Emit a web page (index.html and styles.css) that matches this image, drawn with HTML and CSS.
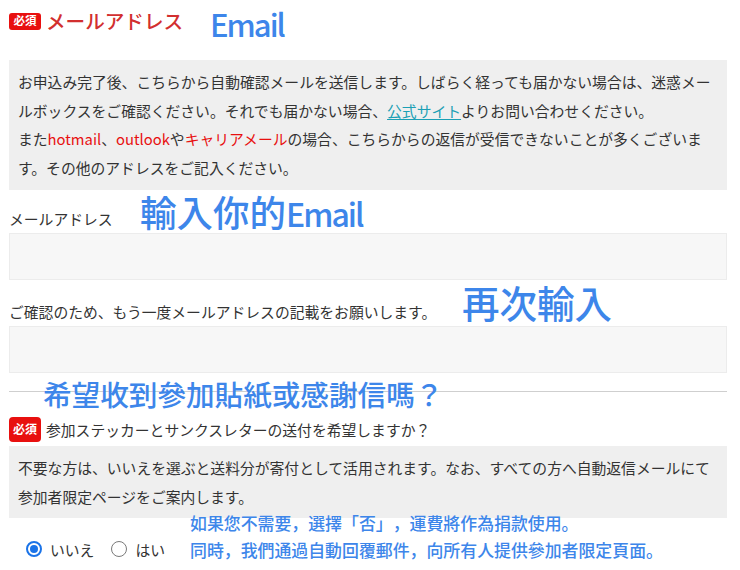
FILE: index.html
```html
<!DOCTYPE html>
<html lang="ja">
<head>
<meta charset="utf-8">
<link rel="stylesheet" href="styles.css">
</head>
<body>
<div class="page">
  <div class="head">
    <span class="badge">必須</span>
    <span class="title">メールアドレス</span>
  </div>
  <div class="note note-main">お申込み完了後、こちらから自動確認メールを送信します。しばらく経っても届かない場合は、迷惑メールボックスをご確認ください。それでも届かない場合、<a class="link" href="#">公式サイト</a>よりお問い合わせください。<br>また<span class="red">hotmail</span>、<span class="red">outlook</span>や<span class="red">キャリアメール</span>の場合、こちらからの返信が受信できないことが多くございます。その他のアドレスをご記入ください。</div>
  <div class="label label-first">メールアドレス</div>
  <div class="input"></div>
  <div class="label label-second">ご確認のため、もう一度メールアドレスの記載をお願いします。</div>
  <div class="input"></div>
  <hr class="rule">
  <div class="q">
    <span class="badge badge-tall">必須</span>
    <span class="q-text">参加ステッカーとサンクスレターの送付を希望しますか？</span>
  </div>
  <div class="note note-sub">不要な方は、いいえを選ぶと送料分が寄付として活用されます。なお、すべての方へ自動返信メールにて参加者限定ページをご案内します。</div>
  <div class="radios">
    <label class="opt"><span class="radio checked"></span><span>いいえ</span></label>
    <label class="opt"><span class="radio"></span><span>はい</span></label>
  </div>

  <div class="ann ann-email"><span class="latin">Email</span></div>
  <div class="ann ann-input">輸入你的<span class="latin">Email</span></div>
  <div class="ann ann-again">再次輸入</div>
  <div class="ann ann-q">希望收到參加貼紙或感謝信嗎？</div>
  <div class="ann ann-small">如果您不需要，選擇「否」，運費將作為捐款使用。<br>同時，我們通過自動回覆郵件，向所有人提供參加者限定頁面。</div>
</div>
</body>
</html>
```

FILE: styles.css
```css
* { box-sizing: border-box; }
html, body { margin: 0; padding: 0; background: #fff; }
body {
  font-family: "Noto Sans CJK JP", "Noto Sans", sans-serif;
  color: #333;
  font-size: 14.8px;
  text-spacing-trim: space-all;
}
.page {
  position: relative;
  width: 740px;
  height: 570px;
  padding: 0 13px 0 9px;
  overflow: hidden;
}
.head {
  display: flex;
  align-items: center;
  gap: 5px;
  padding-top: 9px;
  height: 33px;
}
.badge {
  display: inline-flex;
  align-items: center;
  justify-content: center;
  width: 32px;
  height: 17px;
  background: #e8100f;
  color: #fff;
  border-radius: 3px;
  font-size: 11.5px;
  font-weight: 700;
  line-height: 1;
}
.badge-tall {
  height: 25px;
  width: 32px;
  border-radius: 4px;
  font-size: 12px;
}
.title {
  color: #d22f2f;
  font-size: 19.6px;
  font-weight: 500;
  line-height: 24px;
}
.note {
  background: #efefef;
  padding: 8px 9px;
  line-height: 28.6px;
}
.note-main { margin-top: 27px; }
.red { color: #e8100f; }
.link {
  color: #1ba0b5;
  text-decoration: underline;
  text-underline-offset: 2px;
}
.label { line-height: 29px; }
.label-first { margin-top: 14px; }
.label-second { margin-top: 18px; line-height: 28px; }
.input {
  height: 47px;
  background: #f7f7f7;
  border: 1px solid #ececec;
}
.rule {
  margin: 18px 0 0;
  border: 0;
  border-top: 1px solid #cfcfcf;
  height: 0;
}
.q {
  display: flex;
  align-items: center;
  gap: 5px;
  margin-top: 24px;
  height: 26px;
}
.note-sub {
  margin-top: 4px;
  padding: 7px 9px;
  line-height: 29px;
}
.radios {
  display: flex;
  align-items: center;
  gap: 17px;
  margin-top: 19px;
  padding-left: 17px;
  height: 24px;
}
.opt {
  display: flex;
  align-items: center;
  gap: 8px;
}
.radio {
  width: 16px;
  height: 16px;
  border-radius: 50%;
  border: 1px solid #7a7a7a;
  background: #fff;
  position: relative;
}
.radio.checked { border: 2px solid #1a73e8; }
.radio.checked::after {
  content: "";
  position: absolute;
  left: 2px; top: 2px;
  width: 8px; height: 8px;
  border-radius: 50%;
  background: #1a73e8;
}
.ann {
  position: absolute;
  color: #3d86ea;
  font-family: "Noto Sans CJK TC", "Noto Sans", sans-serif;
  font-weight: 500;
  white-space: nowrap;
  line-height: 1;
}
.latin { letter-spacing: -2px; }
.ann-email { left: 210px; top: 8px; font-size: 31px; }
.ann-input { left: 140px; top: 194px; font-size: 36.5px; }
.ann-input .latin { font-size: 32px; }
.ann-again { left: 462px; top: 283px; font-size: 37.5px; }
.ann-q { left: 43px; top: 380px; font-size: 28.6px; }
.ann-small { left: 190px; top: 509px; font-size: 16.9px; line-height: 27px; }
```
